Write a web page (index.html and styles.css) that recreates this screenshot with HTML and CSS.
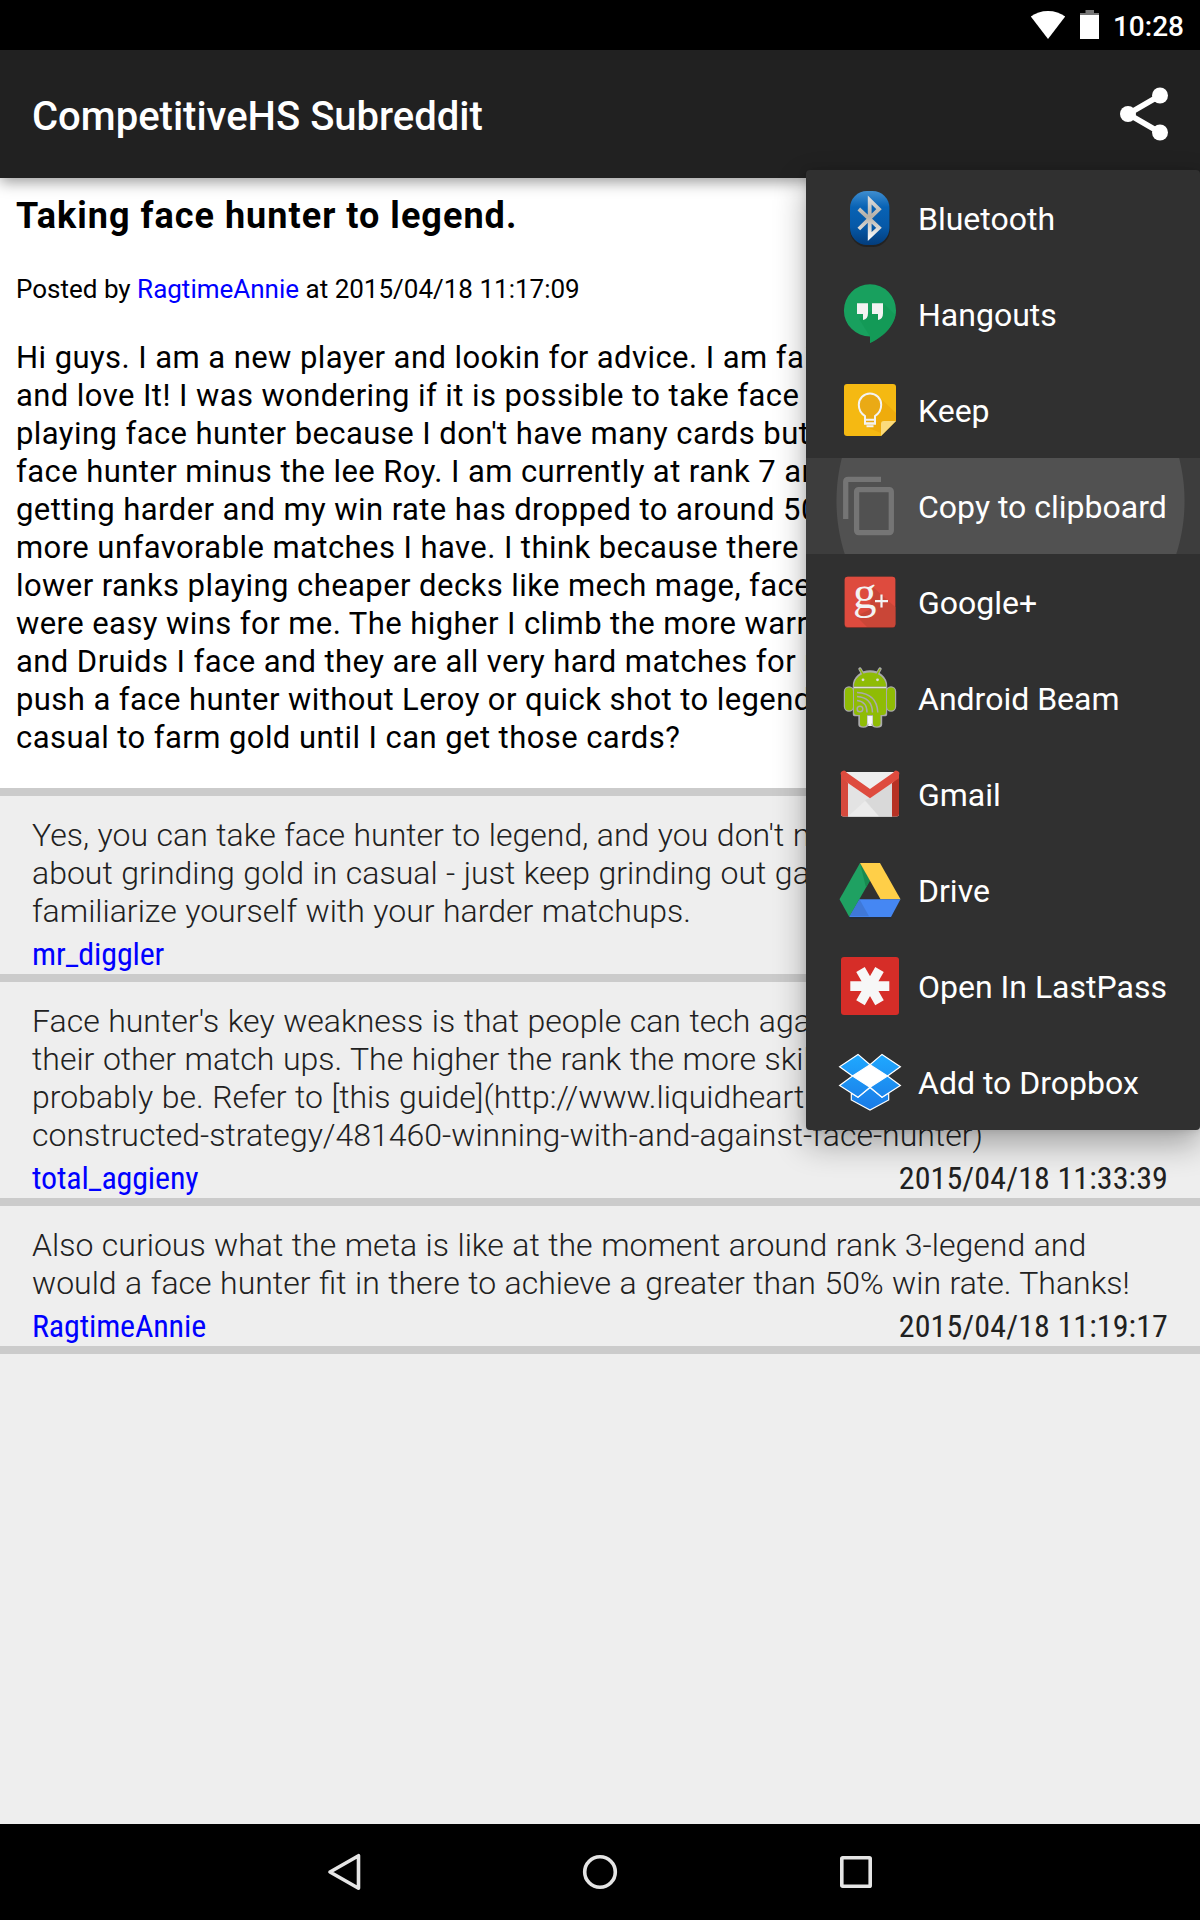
FILE: index.html
```html
<!DOCTYPE html>
<html lang="en">
<head>
<meta charset="utf-8">
<title>CompetitiveHS Subreddit</title>
<link rel="stylesheet" href="styles.css">
</head>
<body>
<div class="screen">
  <div class="status-bar">
    <svg class="wifi" width="36" height="30" viewBox="0 0 36 30"><path d="M18 29 .8 6.600Q8 1 18 1t17.200 5.600z"/></svg>
    <svg class="battery" width="20" height="30" viewBox="0 0 20 30"><path class="battery-cap" d="M5.500 0h8.500v3H19v3H0V3h5.500z"/><path d="M0 5h19v24H0z"/></svg>
    <span class="clock">10:28</span>
  </div>

  <header class="app-bar">
    <h1 class="app-title">CompetitiveHS Subreddit</h1>
    <svg class="share" width="50" height="56" viewBox="0 0 50 56"><path d="M41 9.500 9 28l32 18.500"/><circle cx="41" cy="9.500" r="8"/><circle cx="9" cy="28" r="8"/><circle cx="41" cy="46.500" r="8"/></svg>
  </header>

  <main class="content">
    <article class="post">
      <h2 class="post-title">Taking face hunter to legend.</h2>
      <p class="post-meta">Posted by <a>RagtimeAnnie</a> at 2015/04/18 11:17:09</p>
      <p class="post-body">Hi guys. I am a new player and lookin for advice. I am fairly<br>
        and love It! I was wondering if it is possible to take face hunter<br>
        playing face hunter because I don't have many cards but I have<br>
        face hunter minus the lee Roy. I am currently at rank 7 and it is<br>
        getting harder and my win rate has dropped to around 50% with<br>
        more unfavorable matches I have. I think because there are<br>
        lower ranks playing cheaper decks like mech mage, face hunter<br>
        were easy wins for me. The higher I climb the more warriors<br>
        and Druids I face and they are all very hard matches for me.<br>
        push a face hunter without Leroy or quick shot to legend or<br>
        casual to farm gold until I can get those cards?</p>
    </article>

    <section class="comment">
      <p class="comment-text">Yes, you can take face hunter to legend, and you don't need<br>about grinding gold in casual - just keep grinding out games<br>familiarize yourself with your harder matchups.</p>
      <div class="comment-foot"><a class="author">mr_diggler</a></div>
    </section>
    <section class="comment">
      <p class="comment-text">Face hunter's key weakness is that people can tech against<br>their other match ups. The higher the rank the more skilled<br>probably be. Refer to [this guide](http://www.liquidhearth<br>constructed-strategy/481460-winning-with-and-against-face-hunter)</p>
      <div class="comment-foot"><a class="author">total_aggieny</a><time class="date">2015/04/18 11:33:39</time></div>
    </section>
    <section class="comment">
      <p class="comment-text">Also curious what the meta is like at the moment around rank 3-legend and<br>would a face hunter fit in there to achieve a greater than 50% win rate. Thanks!</p>
      <div class="comment-foot"><a class="author">RagtimeAnnie</a><time class="date">2015/04/18 11:19:17</time></div>
    </section>
  </main>

  <nav class="nav-bar">
    <svg width="40" height="40" viewBox="0 0 40 40"><path d="M6 20 34.500 3.700v32.600z"/></svg>
    <svg width="40" height="40" viewBox="0 0 40 40"><circle cx="20" cy="20" r="15.300"/></svg>
    <svg width="40" height="40" viewBox="0 0 40 40"><rect x="5.800" y="5.800" width="28.400" height="28.400" rx=".8"/></svg>
  </nav>

  <ul class="share-menu">
    <li><svg viewBox="34 0 72 96"><defs><linearGradient id="bt" x2="0" y2="1"><stop stop-color="#3f8ed0"/><stop offset=".3" stop-color="#0862b4"/><stop offset=".65" stop-color="#0659a8"/><stop offset="1" stop-color="#033d7c"/></linearGradient><linearGradient id="rune" x2="0" y2="1"><stop stop-color="#d8d8d8"/><stop offset=".45" stop-color="#b5b0a8"/><stop offset="1" stop-color="#f4f4f4"/></linearGradient></defs><rect x="50" y="23" width="40" height="54" rx="17" fill="#222"/><rect x="50" y="21" width="39.500" height="54" rx="17" fill="url(#bt)"/><path d="M58.800 39 79 57.800 69.700 66.500V30L79 39.200 58.800 59" fill="none" stroke="url(#rune)" stroke-width="3.800"/></svg><span>Bluetooth</span></li>
    <li><svg viewBox="34 0 72 96"><path d="M70 18.300a26 26 0 0 0 0 52.200V77c15-7 26-19 26-32.500a26 26 0 0 0-26-26.200z" fill="#18a05e"/><path d="m83 37 12.500 12C92 63 82 71.500 70 77v-6.500L59 53z" fill="#109653" opacity=".6"/><path d="M57 37.300h11v10q0 6-5 6.700V48h-6zM72 37.300h11v10q0 6-5 6.700V48h-6z" fill="#f3f3f3"/></svg><span>Hangouts</span></li>
    <li><svg viewBox="34 0 72 96"><path d="M47 22h46a3 3 0 0 1 3 3v34L81 74H47a3 3 0 0 1-3-3V25a3 3 0 0 1 3-3z" fill="#f5b912"/><path d="m79 35 17 16v8H83q-2 0-2 2v10L66 65z" fill="#efac0c"/><path d="M84 59h12L81 74V62q0-3 3-3z" fill="#fbdb7c"/><path d="M65 61.500V54q-6.200-4-6.200-11.300a11.200 11.200 0 0 1 22.400 0Q81.200 50 75 54v7.500z" fill="#eaaa15" stroke="#f3f3f3" stroke-width="2"/><path d="M64 57.700h12M64 61.500h12M66.500 64.200h7" stroke="#f3f3f3" stroke-width="2"/></svg><span>Keep</span></li>
    <li class="pressed"><svg viewBox="34 0 72 96"><path d="M45.700 61V24q0-2.700 2.700-2.700H81" fill="none" stroke="#757575" stroke-width="5.300"/><rect x="56.600" y="31.600" width="34.700" height="43" rx="2" fill="none" stroke="#757575" stroke-width="5.300"/></svg><span>Copy to clipboard</span></li>
    <li><svg viewBox="34 0 72 96"><rect x="44.700" y="22.700" width="50.600" height="51" rx="3" fill="#963329"/><rect x="44.700" y="22.700" width="50.600" height="50.300" rx="3" fill="#de4b3e"/><path d="m73 33 12 11 10.300 9v17a3 3 0 0 1-3 3H67L56 62l13-6z" fill="#c94637"/><text class="gplus" x="53" y="53.500">g</text><path d="M75 47.200h13M81.500 40.500v13" stroke="#f3f3f3" stroke-width="2.200"/></svg><span>Google+</span></li>
    <li><svg viewBox="34 0 72 96"><path d="M68 62h4v14h-4z" fill="#f5f5f5"/><g stroke="#aaa" stroke-width="3.400" fill="#aaa" stroke-linejoin="round" stroke-linecap="round"><path d="m60 19 4 7m16-7-4 7"/><path d="M54.500 36.500v-1a15.500 13.500 0 0 1 31 0v29h-5v10q0 1.500-3.500 1.500t-4-2V65h-6v9q0 2-3.500 2T60 74.500v-10h-5.500z"/><rect x="45.500" y="38" width="7" height="22" rx="3.500"/><rect x="87.500" y="38" width="7" height="22" rx="3.500"/></g><path d="m60 19 4 7m16-7-4 7" stroke="#8fb80d" stroke-width="1.500"/><path d="M54 36.500a16 14 0 0 1 32 0zM54 38.500h32V62q0 3-3 3h-2.500v8q0 3.500-3.800 3.500T73 73v-8h-6v8q0 3.500-3.700 3.500T60 73v-8h-3q-3 0-3-3z" fill="#8fbc05"/><rect x="45" y="37.500" width="8" height="23" rx="4" fill="#8fbc05"/><rect x="87" y="37.500" width="8" height="23" rx="4" fill="#8fbc05"/><path d="M54 37.500h32" stroke="#ddd" stroke-width="1"/><path d="M67.500 66h5v9l-2.500-3-2.500 3z" fill="#f5f5f5"/><g fill="#ddd"><circle cx="63" cy="29.800" r="1.400"/><circle cx="77.500" cy="29.800" r="1.400"/></g><g fill="none" stroke="#aaa" stroke-width="1.500"><circle cx="60" cy="59" r="2.800"/><path d="M57 50.500q10 1 10 12M57 46.500q15 1 15.500 16M57 42.500q20 1 20.800 20"/></g></svg><span>Android Beam</span></li>
    <li><svg viewBox="34 0 72 96"><path d="M41 29a3 3 0 0 1 3-3h52a3 3 0 0 1 3 3v39a2.500 2.500 0 0 1-2.500 2.500h-53A2.500 2.500 0 0 1 41 68z" fill="#eee"/><path d="M48 37 70 52l22-15v33.500H48z" fill="#e3e3e3"/><path d="m65 54 5-2 22-15v33.500H79z" fill="#d9d9d9"/><path d="M48 70.500 65 55l14 15.500z" fill="#ebebeb"/><path d="M48 37v33.500h-4.500A2.500 2.500 0 0 1 41 68V30z" fill="#d64a3d"/><path d="M92 37v33.500h4.500A2.500 2.500 0 0 0 99 68V30z" fill="#b73224"/><path d="M41 29a3 3 0 0 1 5.500-2.500L70 43l23.500-16.500A3 3 0 0 1 99 29v3.300L70 52.300 41 32.300z" fill="#de4b3e"/></svg><span>Gmail</span></li>
    <li><svg viewBox="34 0 72 96"><path d="M49.300 76h42" stroke="#1d2b45"/><path d="m60 21 10 17.500L49.300 75l-9.800-17.700z" fill="#1fa162"/><path d="m60 21 10 17.500-4 7z" fill="#178a50"/><path d="M60 21h20l20.500 36.300h-20z" fill="#ffcf48"/><path d="M59.500 57.300h41L91 75H49.300z" fill="#4587f3"/><path d="m59.500 57.300 9.500 17H49.700z" fill="#3f78d8"/></svg><span>Drive</span></li>
    <li><svg viewBox="34 0 72 96"><rect x="41" y="19" width="58" height="58" rx="3" fill="#d62d28"/><path d="M50.300 48.200h39M60.500 31.500l19 33.200M79.500 31.500l-19 33.200" stroke="#f7f7f7" stroke-width="9.800"/></svg><span>Open In LastPass</span></li>
    <li><svg viewBox="34 0 72 96"><defs><linearGradient id="db" gradientUnits="userSpaceOnUse" x1="0" y1="20" x2="0" y2="76"><stop stop-color="#1fa9ff"/><stop offset="1" stop-color="#1a7ae6"/></linearGradient></defs><path d="M58 20.400 70 30.500l12-10.100 18.400 12.300L87.500 42l12.900 9.400L82 63.300 70 53.500 58 63.300 39.600 51.400 52.500 42l-12.900-9.300z" fill="#fff"/><g fill="url(#db)" stroke="#fff" stroke-width="1.200"><path d="m51.300 59 6.700 4.300 12-9.800 12 9.800 6.700-4.300v7L70 76l-18.700-10z"/><path d="M58 20.400 70 30.700 52.500 42l-12.900-9.300zM82 20.400l18.400 12.300L87.500 42 70 30.700zM52.500 42 70 53.200 58 63.300 39.600 51.400zM87.500 42l12.900 9.400L82 63.300 70 53.200z"/></g></svg><span>Add to Dropbox</span></li>
  </ul>
</div>
</body>
</html>
```
FILE: styles.css
```css
* { box-sizing: border-box; }
body, h1, h2, p, ul { margin: 0; padding: 0; }
body { font-family: Roboto, "Liberation Sans", sans-serif; background: #000; }
a { color: #00f; text-decoration: none; }
.screen { position: relative; display: flex; flex-direction: column; width: 1200px; height: 1920px; overflow: hidden; }

.status-bar { flex: none; height: 50px; padding: 10px 16px 0 0; display: flex; justify-content: flex-end; background: #000; fill: #fff; }
.wifi { margin-right: 14px; }
.battery { margin-right: 13px; }
.battery-cap { fill: #757575; }
.clock { font-size: 28px; line-height: 34px; font-weight: 500; color: #fff; }

.app-bar { position: relative; z-index: 1; flex: none; height: 128px; padding: 0 31px 0 32px; display: flex; align-items: center; justify-content: space-between; background: #212121; box-shadow: 0 4px 14px rgba(0, 0, 0, .4); }
.app-title { padding-top: 6px; font-size: 40px; line-height: 48px; font-weight: 500; color: #fff; }
.share { fill: #fff; stroke: #fff; }
.share path { fill: none; stroke-width: 5.5; }
.share circle { stroke: none; }

.content { flex: 1; overflow: hidden; background: #eee; }
.post { height: 618px; padding: 16px; border-bottom: 8px solid #cbcbcb; background: #fff; color: #000; white-space: nowrap; }
.post-title { font-size: 36px; line-height: 44px; font-weight: 700; letter-spacing: 1.02px; }
.post-meta { margin-top: 34px; font-size: 26px; line-height: 34px; }
.post-body { margin-top: 33px; font-size: 31px; line-height: 38px; letter-spacing: .43px; }

.comment { padding: 20px 32px 1px; border-bottom: 8px solid #cbcbcb; color: #212121; }
.comment-text { font-size: 32px; line-height: 38px; font-weight: 300; word-spacing: .7px; white-space: nowrap; }
.comment-foot { margin-top: 5px; display: flex; justify-content: space-between; font-family: "Roboto Condensed", Roboto, sans-serif; font-size: 32px; line-height: 38px; }
.author { letter-spacing: -.15px; }
.date { letter-spacing: .11px; }

.nav-bar { flex: none; height: 96px; display: flex; align-items: center; justify-content: center; gap: 216px; background: #000; }
.nav-bar svg { fill: none; stroke: #e5e5e5; stroke-width: 3.6; stroke-linejoin: round; }

.share-menu { position: absolute; z-index: 2; top: 170px; right: 0; width: 394px; border-radius: 4px; background: #303030; box-shadow: 0 14px 32px rgba(0, 0, 0, .32), 0 0 8px rgba(0, 0, 0, .12); list-style: none; color: #fff; font-size: 32px; }
.share-menu li { display: flex; align-items: center; gap: 12px; height: 96px; padding-left: 28px; white-space: nowrap; }
.share-menu svg { flex: none; width: 72px; height: 96px; }
.share-menu span { padding-top: 2px; }
.pressed { background: radial-gradient(circle at 204.5px 43px, #515151 173.5px, #3d3d3d 174.5px); }
.gplus { font: 47px "Liberation Serif", serif; fill: #f3f3f3; }
```
